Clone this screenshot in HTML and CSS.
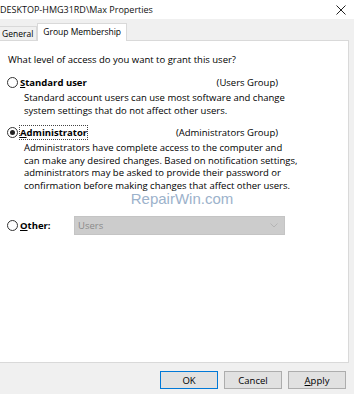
FILE: index.html
```html
<!DOCTYPE html>
<html lang="en">
<head>
  <meta charset="UTF-8" />
  <title>Max Properties</title>
  <link rel="stylesheet" href="styles.css">
</head>
<body>

  <div class="janela">
    <div class="barra-titulo">
      <span class="titulo">DESKTOP-HMG31RD\Max Properties</span>
      <svg class="fechar" width="10" height="10" viewBox="0 0 10 10">
        <path d="M0.5 0.5 L9.5 9.5 M9.5 0.5 L0.5 9.5" stroke="#222" stroke-width="1" fill="none" />
      </svg>
    </div>

    <div class="abas">
      <div class="aba">General</div>
      <div class="aba ativa">Group Membership</div>
    </div>

    <div class="painel">
      <div class="pergunta">What level of access do you want to grant this user?</div>

      <div class="opcao">
        <label class="linha">
          <span class="radio"></span>
          <span class="nome"><u>S</u>tandard user</span>
          <span class="grupo">(Users Group)</span>
        </label>
        <div class="descricao">
          Standard account users can use most software and change<br>
          system settings that do not affect other users.
        </div>
      </div>

      <div class="opcao">
        <label class="linha">
          <span class="radio marcado"></span>
          <span class="nome foco"><u>A</u>dministrator</span>
          <span class="grupo">(Administrators Group)</span>
        </label>
        <div class="descricao">
          Administrators have complete access to the computer and<br>
          can make any desired changes. Based on notification settings,<br>
          administrators may be asked to provide their password or<br>
          confirmation before making changes that affect other users.
        </div>
      </div>

      <div class="marca">RepairWin.com</div>

      <div class="linha outro">
        <span class="radio"></span>
        <span class="nome"><u>O</u>ther:</span>
        <div class="selecao">
          <span>Users</span>
          <svg width="8" height="5" viewBox="0 0 8 5">
            <path d="M0.5 0.5 L4 4 L7.5 0.5" stroke="#b4b4b4" stroke-width="1" fill="none" />
          </svg>
        </div>
      </div>
    </div>

    <div class="rodape">
      <button class="botao padrao">OK</button>
      <button class="botao">Cancel</button>
      <button class="botao"><u>A</u>pply</button>
    </div>
  </div>

</body>
</html>
```

FILE: styles.css
```css
body {
  margin: 0;
  font-family: "Open Sans", "Noto Sans", sans-serif;
  font-size: 9.5px;
  color: #000;
  background-color: #f0f0f0;
}

.janela {
  width: 354px;
  height: 394px;
  display: flex;
  flex-direction: column;
  overflow: hidden;
}

.barra-titulo {
  height: 19px;
  background-color: #fff;
  display: flex;
  align-items: center;
  justify-content: space-between;
  padding-right: 8px;
}

.titulo {
  font-size: 9px;
  color: #111;
}

.abas {
  display: flex;
  align-items: flex-end;
  height: 21px;
  position: relative;
  z-index: 1;
  font-size: 8.5px;
}

.aba {
  height: 13px;
  line-height: 13px;
  padding: 0 3px 0 2px;
  border: 1px solid #d9d9d9;
  border-bottom: none;
  background-color: #f0f0f0;
  margin-left: -1px;
}

.aba.ativa {
  height: 17px;
  line-height: 15px;
  padding: 0 5px;
  background-color: #fff;
  margin-bottom: -1px;
  margin-left: 0;
}

.painel {
  width: 350px;
  height: 323px;
  margin-left: -1px;
  box-sizing: border-box;
  background-color: #fff;
  border: 1px solid #d9d9d9;
  padding: 12px 0 0 8px;
}

.pergunta {
  line-height: 13px;
  margin-bottom: 10px;
}

.opcao {
  margin-bottom: 9px;
}

.linha {
  display: flex;
  align-items: center;
  width: 270px;
  height: 13px;
}

.radio {
  width: 11px;
  height: 11px;
  border: 1px solid #333;
  border-radius: 50%;
  box-sizing: border-box;
  margin-right: 2px;
  margin-left: -1px;
  display: flex;
  align-items: center;
  justify-content: center;
}

.radio.marcado::after {
  content: "";
  width: 5px;
  height: 5px;
  border-radius: 50%;
  background-color: #222;
}

.nome {
  font-weight: bold;
  flex-grow: 1;
}

.nome.foco {
  flex-grow: 0;
  outline: 1px dotted #444;
  outline-offset: 0;
  margin-right: auto;
}

.grupo {
  color: #000;
}

.descricao {
  margin-top: 3px;
  padding-left: 16px;
  line-height: 12.5px;
}

.marca {
  text-align: center;
  width: 340px;
  margin-left: 4px;
  font-size: 15px;
  line-height: 12px;
  color: #9cb2cb;
  font-family: "Liberation Sans", sans-serif;
  margin-top: -8px;
}

.outro {
  width: 277px;
  height: 20px;
  margin-top: 10px;
}

.outro .nome {
  flex-grow: 0;
  width: 54px;
}

.selecao {
  flex-grow: 1;
  height: 19px;
  box-sizing: border-box;
  background-color: #cccccc;
  border: 1px solid #c4c4c4;
  display: flex;
  align-items: center;
  justify-content: space-between;
  padding: 0 6px 0 3px;
  color: #8a8a8a;
}

.rodape {
  display: flex;
  justify-content: flex-end;
  gap: 6px;
  padding: 8px 8px 0 0;
}

.botao {
  width: 58px;
  height: 18px;
  font-family: "Open Sans", "Noto Sans", sans-serif;
  font-size: 9.5px;
  background-color: #e1e1e1;
  border: 1px solid #adadad;
  padding: 0;
  color: #000;
}

.botao.padrao {
  border-color: #0078d7;
}
```
